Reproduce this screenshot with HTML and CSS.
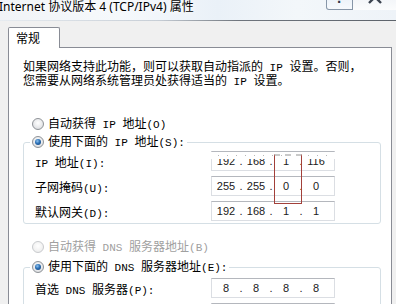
FILE: index.html
```html
<!DOCTYPE html>
<html lang="zh-CN">
<head>
<meta charset="utf-8">
<title>Internet 协议版本 4 (TCP/IPv4) 属性</title>
<link rel="stylesheet" href="styles.css">
</head>
<body>
<div class="window">
  <div class="titlebar">
    <span class="title">Internet 协议版本 4 (TCP/IPv4) 属性</span>
    <div class="caption-btns">
      <span class="cbtn help">?</span>
      <span class="cbtn close"><svg width="16" height="14" viewBox="0 0 16 14"><path d="M2 0 L14 12 M14 0 L2 12" stroke="#3c4450" stroke-width="2.4" fill="none"/></svg></span>
    </div>
  </div>
  <div class="tabs"><div class="tab">常规</div></div>
  <div class="panel">
    <p class="intro">如果网络支持此功能，则可以获取自动指派的<span class="en"> IP </span>设置。否则，<br>您需要从网络系统管理员处获得适当的<span class="en"> IP </span>设置。</p>
    <div class="radio-row"><span class="radio"></span><span>自动获得<span class="en"> IP </span>地址<span class="en">(O)</span></span></div>
    <fieldset class="group">
      <legend class="radio-row"><span class="radio checked"></span><span>使用下面的<span class="en"> IP </span>地址<span class="en">(S):</span></span></legend>
      <div class="field"><span class="flabel"><span class="en">IP </span>地址<span class="en">(I):</span></span>
        <div class="ipbox"><span class="oct">192</span><span class="dot">.</span><span class="oct">168</span><span class="dot">.</span><span class="oct">1</span><span class="dot">.</span><span class="oct">116</span></div></div>
      <div class="field"><span class="flabel">子网掩码<span class="en">(U):</span></span>
        <div class="ipbox"><span class="oct">255</span><span class="dot">.</span><span class="oct">255</span><span class="dot">.</span><span class="oct">0</span><span class="dot">.</span><span class="oct">0</span></div></div>
      <div class="field"><span class="flabel">默认网关<span class="en">(D):</span></span>
        <div class="ipbox"><span class="oct">192</span><span class="dot">.</span><span class="oct">168</span><span class="dot">.</span><span class="oct">1</span><span class="dot">.</span><span class="oct">1</span></div></div>
    </fieldset>
    <div class="radio-row disabled dns-auto"><span class="radio"></span><span>自动获得<span class="en"> DNS </span>服务器地址<span class="en">(B)</span></span></div>
    <fieldset class="group dns">
      <legend class="radio-row"><span class="radio checked"></span><span>使用下面的<span class="en"> DNS </span>服务器地址<span class="en">(E):</span></span></legend>
      <div class="field"><span class="flabel">首选<span class="en"> DNS </span>服务器<span class="en">(P):</span></span>
        <div class="ipbox"><span class="oct">8</span><span class="dot">.</span><span class="oct">8</span><span class="dot">.</span><span class="oct">8</span><span class="dot">.</span><span class="oct">8</span></div></div>
      <div class="field"><span class="flabel">备用<span class="en"> DNS </span>服务器<span class="en">(A):</span></span>
        <div class="ipbox"><span class="oct"></span><span class="dot">.</span><span class="oct"></span><span class="dot">.</span><span class="oct"></span><span class="dot">.</span><span class="oct"></span></div></div>
    </fieldset>
  </div>
  <div class="smudge"></div>
  <div class="mark"></div>
</div>
</body>
</html>
```

FILE: styles.css
```css
html, body {
  margin: 0;
  padding: 0;
}
body {
  width: 396px;
  height: 304px;
  overflow: hidden;
  background: #f0f0f0;
  font-family: "Noto Sans CJK SC", sans-serif;
  font-size: 12px;
  color: #000;
}
.en {
  font-family: "Liberation Mono", monospace;
  font-size: 11px;
}
.window {
  position: relative;
  width: 396px;
  height: 304px;
  overflow: hidden;
}
.titlebar {
  height: 20px;
  display: flex;
  align-items: flex-start;
  overflow: hidden;
  border-bottom: 1px solid transparent;
  border-image: linear-gradient(to right, #e6ebf0 0%, #c7ced6 40%, #6f757d 60%, #5d636b 100%) 1;
  background: linear-gradient(to right, #f1f4f7 0%, #f6f9fc 30%, #eaf1f8 55%, #f3f7fa 75%, #eef3f8 100%);
}
.title {
  font-family: "Noto Sans", "Noto Sans CJK SC", sans-serif;
  font-size: 12px;
  line-height: 14px;
  margin-left: -1px;
  white-space: nowrap;
  text-shadow: 0 0 6px #fff, 0 0 6px #fff;
}
.caption-btns {
  margin-left: auto;
  display: flex;
  margin-top: -8px;
}
.cbtn {
  height: 18px;
  display: flex;
  align-items: flex-end;
  justify-content: center;
  box-sizing: border-box;
}
.help {
  width: 27px;
  border: 1px solid #8796a8;
  border-top: 0;
  border-radius: 0 0 0 3px;
  background: linear-gradient(to bottom, #e6eef7, #f7fafd);
  font-family: "DejaVu Sans", sans-serif;
  font-weight: bold;
  font-size: 12px;
  line-height: 14px;
  color: #303a48;
  padding-bottom: 3px;
}
.close {
  width: 43px;
  background: linear-gradient(to bottom, #eef2f6, #fbfcfd);
  padding-bottom: 5px;
}
.tabs {
  display: flex;
  margin-top: 6px;
  padding-left: 8px;
}
.tab {
  position: relative;
  z-index: 1;
  width: 52px;
  height: 21px;
  box-sizing: border-box;
  border: 1px solid #898c95;
  border-bottom: 0;
  background: #fff;
  margin-bottom: -1px;
  font-size: 12px;
  line-height: 14px;
  padding: 3px 0 0 7px;
  border-radius: 2px 2px 0 0;
}
.panel {
  margin-left: 8px;
  width: 384px;
  height: 270px;
  box-sizing: border-box;
  border: 1px solid #898c95;
  background: #fff;
  padding: 12px 0 0 14px;
}
.intro {
  margin: 0;
  line-height: 12px;
  white-space: nowrap;
}
.radio-row {
  display: flex;
  align-items: center;
  height: 16px;
  line-height: 16px;
  white-space: nowrap;
  padding-left: 9px;
  margin-top: 28px;
}
.radio {
  width: 12px;
  height: 12px;
  box-sizing: border-box;
  border-radius: 50%;
  border: 1px solid #8e9297;
  background: radial-gradient(circle at 50% 40%, #ffffff 0%, #e8e9eb 55%, #cfd2d6 100%);
  margin-right: 4px;
  display: flex;
  align-items: center;
  justify-content: center;
  flex: none;
}
.radio.checked::after {
  content: "";
  width: 6px;
  height: 6px;
  border-radius: 50%;
  background: radial-gradient(circle at 40% 35%, #8ec3ef 0%, #2b6fb5 45%, #123b6c 100%);
}
.disabled {
  color: #a0a0a0;
}
.disabled .radio {
  border-color: #c9cbce;
  background: radial-gradient(circle at 50% 40%, #ffffff 0%, #f2f2f2 60%, #e4e5e6 100%);
}
.group {
  margin: 2px 0 0 0;
  width: 358px;
  box-sizing: border-box;
  border: 1px solid #d5dfe5;
  border-radius: 3px;
  padding: 1px 0 2px 0;
}
.group legend {
  margin: 0 0 0 6px;
  padding: 0 2px 0 2px;
  height: 16px;
}
.field {
  display: flex;
  align-items: center;
  height: 20px;
  margin-bottom: 5px;
}
.field:last-child {
  margin-bottom: 0;
}
.flabel {
  width: 176px;
  padding-left: 11px;
  white-space: nowrap;
}
.ipbox {
  width: 124px;
  height: 20px;
  box-sizing: border-box;
  border: 1px solid #dbdee3;
  border-top-color: #b4b7bd;
  display: flex;
  align-items: center;
  padding-left: 2px;
  font-family: "Liberation Sans", sans-serif;
  font-size: 11px;
  color: #202020;
}
.oct {
  width: 24px;
  text-align: center;
}
.dot {
  width: 6px;
  text-align: center;
}
.dns-auto {
  margin-top: 15px;
}
.dns {
  margin-top: 4px;
  padding-top: 3px;
}
.smudge {
  position: absolute;
  left: 211px;
  top: 152px;
  width: 124px;
  height: 7px;
  background: #fff;
  background-image: radial-gradient(circle, #b9b9b9 0.6px, transparent 0.9px);
  background-size: 9px 3px;
  background-position: 3px 2px;
  background-repeat: repeat-x;
}
.mark {
  position: absolute;
  left: 274px;
  top: 154px;
  width: 28px;
  height: 50px;
  box-sizing: border-box;
  border: 2px solid #a2403a;
  border-top: 2px dashed #c9c9c9;
  border-width: 2px 1.5px 1.5px 1.5px;
}
```
